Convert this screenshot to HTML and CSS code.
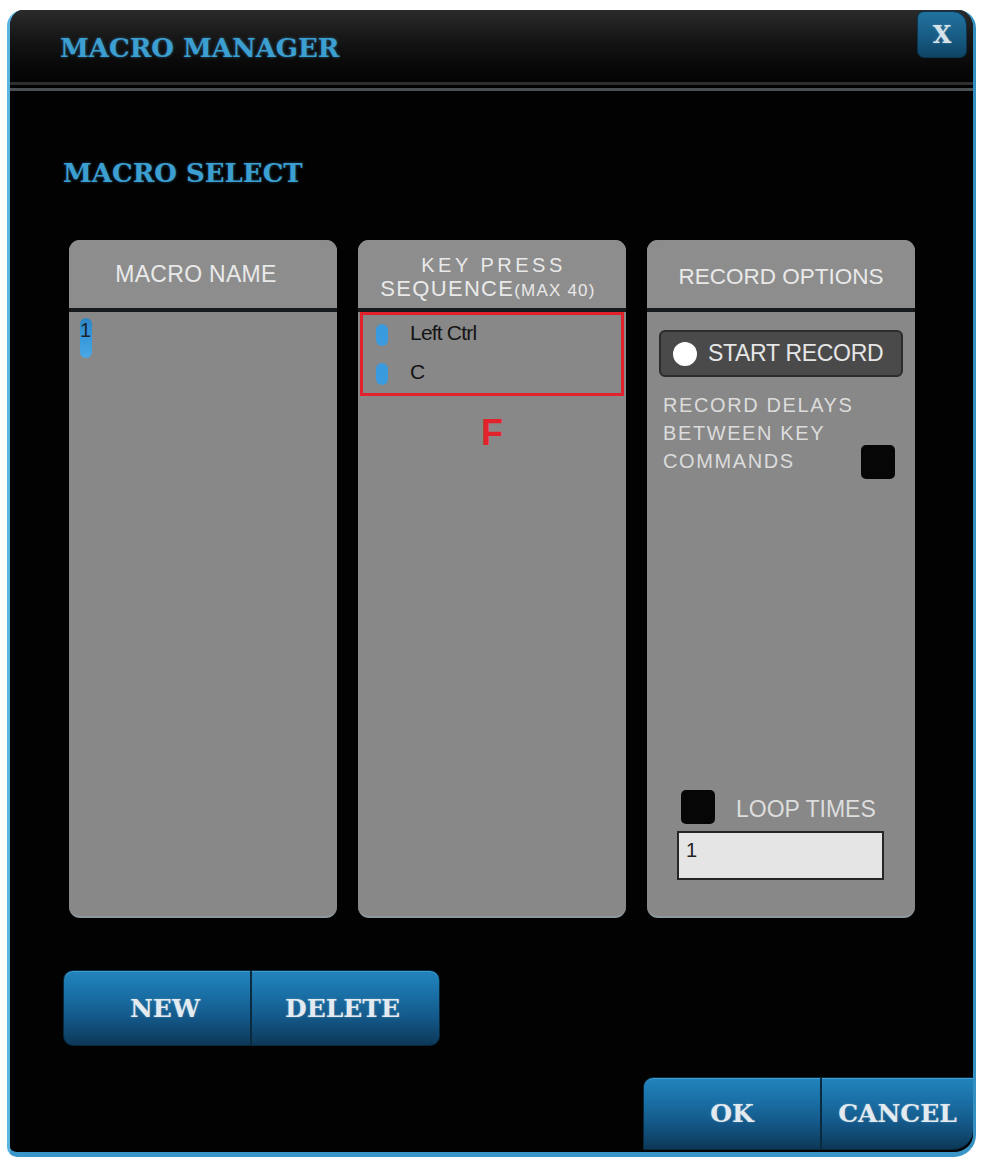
FILE: index.html
```html
<!DOCTYPE html>
<html lang="en">
<head>
<meta charset="utf-8">
<title>Macro Manager</title>
<link rel="stylesheet" href="styles.css">
</head>
<body>
<div class="window">
  <header class="titlebar">
    <h1 class="title">MACRO MANAGER</h1>
    <button class="close" type="button">X</button>
  </header>
  <div class="rule"></div>
  <main class="main">
    <h2 class="section">MACRO SELECT</h2>
    <div class="panels">
      <section class="panel">
        <div class="panel-head name-head">MACRO NAME</div>
        <div class="panel-body names">
          <div class="name-row"><span class="sel-marker">1</span></div>
        </div>
      </section>
      <section class="panel">
        <div class="panel-head two-line">
          <span class="l1">KEY PRESS</span>
          <span class="l2">SEQUENCE<small>(MAX 40)</small></span>
        </div>
        <div class="panel-body seq">
          <div class="highlight">
            <div class="key-row"><span class="key-marker"></span><span class="key">Left Ctrl</span></div>
            <div class="key-row"><span class="key-marker"></span><span class="key">C</span></div>
          </div>
          <div class="callout">F</div>
        </div>
      </section>
      <section class="panel">
        <div class="panel-head opt-head">RECORD OPTIONS</div>
        <div class="panel-body options">
          <button class="record" type="button"><span class="dot"></span>START RECORD</button>
          <div class="delays">
            <p>RECORD DELAYS<br>BETWEEN KEY<br>COMMANDS</p>
            <span class="check"></span>
          </div>
          <div class="loop">
            <div class="loop-row"><span class="check"></span><span class="loop-label">LOOP TIMES</span></div>
            <div class="loop-input">1</div>
          </div>
        </div>
      </section>
    </div>
    <div class="btn-group edit">
      <button type="button" class="b-new">NEW</button><button type="button" class="b-del">DELETE</button>
    </div>
  </main>
  <footer class="footer">
    <div class="btn-group confirm">
      <button type="button" class="b-ok">OK</button><button type="button" class="b-cancel">CANCEL</button>
    </div>
  </footer>
</div>
</body>
</html>
```
FILE: styles.css
```css
* { box-sizing: border-box; }
html, body { margin: 0; padding: 0; background: #ffffff; }
body {
  padding: 10px 0 0 7px;
  font-family: "Liberation Sans", Arial, sans-serif;
}

.window {
  width: 969px;
  height: 1147px;
  background: #030202;
  border-left: 3px solid #5ab4df;
  border-right: 3px solid #3590c2;
  border-bottom: 5px solid #3a95c8;
  border-radius: 16px 18px 22px 10px;
  display: flex;
  flex-direction: column;
  overflow: hidden;
}

/* title bar */
.titlebar {
  height: 75px;
  display: flex;
  align-items: flex-start;
  background: linear-gradient(to bottom, #2b2b2b 0%, #161616 40%, #070707 80%, #040404 100%);
  border-bottom: 3px solid #2d2e2f;
}
.title {
  margin: 0;
  padding: 25px 0 0 50px;
  font-family: "DejaVu Serif", "Liberation Serif", serif;
  font-weight: bold;
  font-size: 26px;
  line-height: 26px;
  color: #3c9fd1;
  text-shadow: 0 0 3px rgba(70, 170, 225, 0.55);
}
.close {
  width: 50px;
  height: 47px;
  margin: 1px 6px 0 auto;
  padding: 0;
  border: 1px solid #0b3552;
  border-radius: 7px 14px 7px 7px;
  background: linear-gradient(to bottom, #21729f 0%, #185e86 50%, #0f4465 100%);
  color: #d6e3eb;
  font-family: "DejaVu Serif", "Liberation Serif", serif;
  font-weight: bold;
  font-size: 24px;
  line-height: 24px;
  text-shadow: 0 0 2px rgba(255, 255, 255, 0.35);
}
.rule {
  height: 3px;
  margin-top: 3px;
  background: #4a4f51;
}

/* main */
.main {
  flex: none;
  padding-left: 53px;
}
.section {
  margin: 69px 0 0 0;
  font-family: "DejaVu Serif", "Liberation Serif", serif;
  font-weight: bold;
  font-size: 26px;
  line-height: 26px;
  color: #3c9fd1;
  text-shadow: 0 0 3px rgba(70, 170, 225, 0.5);
}

.panels {
  margin: 54px 0 0 6px;
  display: grid;
  grid-template-columns: 268px 268px 268px;
  column-gap: 21px;
  height: 678px;
}
.panel {
  background: #888888;
  border-radius: 11px;
  border-bottom: 2px solid #8e989f;
  overflow: hidden;
  display: flex;
  flex-direction: column;
}
.panel-head {
  height: 72px;
  flex: none;
  display: flex;
  align-items: center;
  justify-content: center;
  background: #8d8d8d;
  border-bottom: 4px solid #161a1c;
  color: #e9e9e9;
  font-size: 22.5px;
}
.name-head { padding-right: 14px; font-size: 23px; letter-spacing: 0.3px; }
.opt-head { padding-top: 6px; }
.panel-head.two-line {
  flex-direction: column;
  line-height: 24px;
  padding-top: 8px;
}
.two-line .l1 { font-size: 20px; letter-spacing: 3.5px; padding-left: 3px; }
.two-line .l2 { font-size: 22px; letter-spacing: 1.3px; padding-right: 8px; }
.two-line small { font-size: 17px; letter-spacing: 1.2px; }

.panel-body { flex: 1; }

/* macro names */
.names { padding: 6px 0 0 11px; }
.sel-marker {
  display: inline-block;
  width: 12px;
  height: 40px;
  border-radius: 6px;
  background: linear-gradient(to bottom, #2a86c6 0%, #3b9cdc 60%, #4aa8e6 100%);
  color: #1a2530;
  font-size: 20px;
  line-height: 24px;
  text-align: right;
  padding-right: 1px;
}

/* key sequence */
.highlight {
  margin: 0 2px;
  height: 84px;
  border: 3px solid #e1222c;
  display: flex;
  flex-direction: column;
  justify-content: space-around;
}
.key-row {
  height: 32px;
  display: flex;
  align-items: center;
  padding-left: 13px;
}
.key-marker {
  width: 12px;
  height: 22px;
  border-radius: 6px;
  background: #3a9ade;
}
.key {
  margin-left: 22px;
  margin-top: -3px;
  font-size: 21px;
  letter-spacing: -0.8px;
  color: #141414;
}
.callout {
  margin-top: 19px;
  text-align: center;
  font-weight: bold;
  font-size: 36px;
  line-height: 36px;
  color: #e3232b;
}

/* record options */
.options {
  padding: 18px 12px 36px 12px;
  display: flex;
  flex-direction: column;
}
.record {
  width: 100%;
  height: 47px;
  flex: none;
  display: flex;
  align-items: center;
  gap: 11px;
  padding: 0 0 0 12px;
  background: #4a4a4a;
  border: 2px solid #2c2c2c;
  border-radius: 6px;
  color: #e6e6e6;
  font-family: "Liberation Sans", Arial, sans-serif;
  font-size: 23px;
  letter-spacing: -0.3px;
}
.dot {
  width: 24px;
  height: 24px;
  border-radius: 50%;
  background: #ffffff;
  flex: none;
}
.delays {
  margin-top: 14px;
  display: flex;
  align-items: flex-end;
  justify-content: space-between;
  padding: 0 8px 0 4px;
}
.delays p {
  margin: 0;
  font-size: 20px;
  line-height: 28px;
  letter-spacing: 1.6px;
  color: #dcdcdc;
}
.delays .check { margin-bottom: -4px; }
.check {
  display: block;
  flex: none;
  width: 34px;
  height: 34px;
  border-radius: 5px;
  background: #060606;
}
.loop { margin-top: auto; }
.loop-row {
  display: flex;
  align-items: center;
  gap: 21px;
  padding-left: 22px;
}
.loop-label {
  font-size: 23px;
  color: #dddddd;
  padding-top: 4px;
}
.loop-input {
  margin: 7px 0 0 18px;
  width: 207px;
  height: 49px;
  background: #e5e5e5;
  border: 2px solid #262626;
  padding: 6px 0 0 7px;
  font-size: 20px;
  color: #222222;
}

/* button groups */
.btn-group {
  display: flex;
  overflow: hidden;
  background: linear-gradient(to bottom, #2284bd 0%, #1a71a8 30%, #14598a 62%, #0c3858 100%);
  border: 1px solid #06273c;
  box-shadow: inset 0 1px 0 rgba(130, 205, 245, 0.35);
}
.btn-group button {
  border: none;
  background: transparent;
  padding: 0;
  font-family: "DejaVu Serif", "Liberation Serif", serif;
  font-weight: bold;
  font-size: 25px;
  color: #e3ebf0;
  text-shadow: 0 0 2px rgba(255, 255, 255, 0.3);
}
.btn-group button + button { border-left: 2px solid #0a2a40; }

.edit {
  margin-top: 52px;
  width: 377px;
  height: 76px;
  border-radius: 10px;
}
.b-new { width: 186px; padding-left: 16px !important; }
.b-del { flex: 1; padding-right: 6px !important; }

.footer {
  margin-top: auto;
  display: flex;
  justify-content: flex-end;
}
.confirm {
  width: 330px;
  height: 73px;
  margin-bottom: 2px;
  border-radius: 10px 0 20px 0;
  border-right: none;
}
.b-ok { width: 176px; }
.b-cancel { flex: 1; }
```
